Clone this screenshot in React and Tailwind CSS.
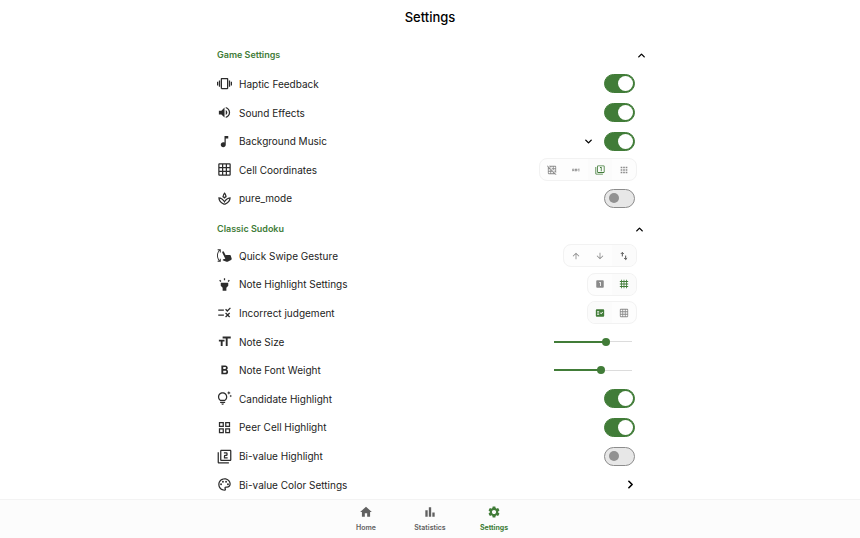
import { useState } from 'react';
import { ChevronDown, ChevronRight, ChevronUp } from 'lucide-react';
import {
  MdAbc,
  MdApps,
  MdArrowDownward,
  MdArrowUpward,
  MdBarChart,
  MdFactCheck,
  MdFilter1,
  MdFilter2,
  MdFormatBold,
  MdFormatSize,
  MdGrid4X4,
  MdGridOff,
  MdGridOn,
  MdHighlight,
  MdHome,
  MdLooksOne,
  MdMusicNote,
  MdOutlineGridView,
  MdOutlinePalette,
  MdOutlineSpa,
  MdOutlineTipsAndUpdates,
  MdRule,
  MdSettings,
  MdSwipeVertical,
  MdVibration,
  MdVolumeUp,
} from 'react-icons/md';

function UpDownIcon({ size }) {
  return (
    <svg viewBox="0 0 24 24" width={size} height={size} fill="none" stroke="currentColor" strokeWidth="2.2">
      <path d="M8 13V4M4.5 7 8 3.5 11.500 7M16 11v9M12.500 17l3.500 3.500 3.500-3.500" />
    </svg>
  );
}

const GAME_ROWS = [
  { label: 'Haptic Feedback', icon: MdVibration, type: 'toggle', on: true },
  { label: 'Sound Effects', icon: MdVolumeUp, type: 'toggle', on: true },
  { label: 'Background Music', icon: MdMusicNote, type: 'toggle', on: true, expandable: true },
  {
    label: 'Cell Coordinates',
    icon: MdGridOn,
    type: 'segment',
    selected: 2,
    options: [
      { name: 'Off', icon: MdGridOff },
      { name: 'Letters', icon: MdAbc },
      { name: 'Numbers', icon: MdFilter1 },
      { name: 'Dots', icon: MdApps },
    ],
  },
  { label: 'pure_mode', icon: MdOutlineSpa, type: 'toggle', on: false },
];

const CLASSIC_ROWS = [
  {
    label: 'Quick Swipe Gesture',
    icon: MdSwipeVertical,
    type: 'segment',
    selected: 2,
    plain: true,
    options: [
      { name: 'Up', icon: MdArrowUpward },
      { name: 'Down', icon: MdArrowDownward },
      { name: 'Both', icon: UpDownIcon },
    ],
  },
  {
    label: 'Note Highlight Settings',
    icon: MdHighlight,
    type: 'segment',
    selected: 1,
    options: [
      { name: 'Single note', icon: MdLooksOne },
      { name: 'Whole grid', icon: MdGrid4X4 },
    ],
  },
  {
    label: 'Incorrect judgement',
    icon: MdRule,
    type: 'segment',
    selected: 0,
    options: [
      { name: 'By answer', icon: MdFactCheck },
      { name: 'By grid', icon: MdGridOn },
    ],
  },
  { label: 'Note Size', icon: MdFormatSize, type: 'slider', value: 69 },
  { label: 'Note Font Weight', icon: MdFormatBold, type: 'slider', value: 61 },
  { label: 'Candidate Highlight', icon: MdOutlineTipsAndUpdates, type: 'toggle', on: true },
  { label: 'Peer Cell Highlight', icon: MdOutlineGridView, type: 'toggle', on: true },
  { label: 'Bi-value Highlight', icon: MdFilter2, type: 'toggle', on: false },
  { label: 'Bi-value Color Settings', icon: MdOutlinePalette, type: 'link' },
];

const TABS = [
  { label: 'Home', icon: MdHome },
  { label: 'Statistics', icon: MdBarChart },
  { label: 'Settings', icon: MdSettings },
];

function Toggle({ id, initial }) {
  const [on, setOn] = useState(initial);
  return (
    <input
      id={id}
      type="checkbox"
      role="switch"
      checked={on}
      onChange={(e) => setOn(e.target.checked)}
      className="flex h-[19px] w-[31px] shrink-0 cursor-pointer appearance-none items-center rounded-full border border-[#8c8c8c] bg-[#e7e7e7] px-1 before:size-[10px] before:rounded-full before:bg-[#919191] checked:justify-end checked:border-[#417c38] checked:bg-[#417c38] checked:px-px checked:before:size-[15px] checked:before:bg-white"
    />
  );
}

function Segment({ label, options, initial, plain }) {
  const [selected, setSelected] = useState(initial);
  return (
    <div role="group" aria-label={label} className="flex h-[23px] overflow-hidden rounded-lg border border-[#f2f2f2] bg-[#fdfdfd]">
      {options.map(({ name, icon: Icon }, i) => {
        const active = i === selected;
        const color = active ? (plain ? 'bg-[#fbfbfb] text-[#444444]' : 'bg-[#fbfbfb] text-[#417c38]') : 'text-[#8a8a8a]';
        return (
          <button
            key={name}
            type="button"
            aria-label={name}
            aria-pressed={active}
            onClick={() => setSelected(i)}
            className={`flex w-6 items-center justify-center ${color}`}
          >
            <Icon size={10} />
          </button>
        );
      })}
    </div>
  );
}

function Slider({ id, initial }) {
  const [value, setValue] = useState(initial);
  return (
    <input
      id={id}
      type="range"
      value={value}
      onChange={(e) => setValue(Number(e.target.value))}
      style={{ backgroundSize: `${value}% 2px, 100% 1px` }}
      className="h-2 w-[78px] cursor-pointer appearance-none bg-[linear-gradient(#417c38,#417c38),linear-gradient(#dcdcdc,#dcdcdc)] bg-[position:left_center] bg-no-repeat [&::-webkit-slider-thumb]:size-2 [&::-webkit-slider-thumb]:appearance-none [&::-webkit-slider-thumb]:rounded-full [&::-webkit-slider-thumb]:bg-[#417c38]"
    />
  );
}

function Row({ row }) {
  const Icon = row.icon;
  const id = row.label.toLowerCase().replace(/[^a-z]+/g, '-');
  const labelClass = 'flex-1 text-[10px] leading-4 text-[#1c1c1c]';

  if (row.type === 'link') {
    return (
      <a href="#colors" className="flex items-center gap-[7px] pr-[10px]">
        <Icon size={15} className="shrink-0 text-[#2c2c2c]" />
        <span className={labelClass}>{row.label}</span>
        <ChevronRight size={13} strokeWidth={3} className="text-black" />
      </a>
    );
  }

  return (
    <div className="flex items-center gap-[7px]">
      <Icon size={15} className="shrink-0 text-[#2c2c2c]" />
      {row.type === 'segment' ? (
        <span className={labelClass}>{row.label}</span>
      ) : (
        <label htmlFor={id} className={labelClass}>{row.label}</label>
      )}
      {row.type === 'toggle' && (
        <div className="flex items-center gap-[10px] pr-3">
          {row.expandable && (
            <button type="button" aria-label="Show music options">
              <ChevronDown size={11} strokeWidth={3} />
            </button>
          )}
          <Toggle id={id} initial={row.on} />
        </div>
      )}
      {row.type === 'segment' && (
        <div className="pr-[10px]">
          <Segment label={row.label} options={row.options} initial={row.selected} plain={row.plain} />
        </div>
      )}
      {row.type === 'slider' && (
        <div className="flex items-center pr-[15px]">
          <Slider id={id} initial={row.value} />
        </div>
      )}
    </div>
  );
}

function SectionHeader({ title, className }) {
  return (
    <div className={`flex items-center justify-between text-[9px] leading-3 font-semibold text-[#417c38] ${className}`}>
      <h2>{title}</h2>
      <button type="button" aria-label={`Collapse ${title}`} className="text-black">
        <ChevronUp size={11} strokeWidth={3} />
      </button>
    </div>
  );
}

export default function App() {
  return (
    <div className="flex h-screen flex-col bg-white font-['Inter',sans-serif] text-black">
      <header className="flex h-[41px] shrink-0 items-center justify-center pb-2">
        <h1 className="text-[13px] leading-5 font-medium">Settings</h1>
      </header>
      <main className="flex-1 overflow-y-auto">
        <div className="mx-auto grid h-full max-w-[434px] auto-rows-[minmax(28px,1fr)] pl-1">
          <SectionHeader title="Game Settings" className="" />
          {GAME_ROWS.map((row) => (
            <Row key={row.label} row={row} />
          ))}
          <SectionHeader title="Classic Sudoku" className="pt-1 pr-[2px]" />
          {CLASSIC_ROWS.map((row) => (
            <Row key={row.label} row={row} />
          ))}
        </div>
      </main>
      <nav className="flex h-[39px] shrink-0 justify-center border-t border-[#f3f3f3] bg-[#fcfcfc]">
        {TABS.map(({ label, icon: Icon }) => (
          <a
            key={label}
            href={`#${label.toLowerCase()}`}
            className={`flex w-16 flex-col items-center justify-center gap-1 text-[7px] leading-[10px] ${label === 'Settings' ? 'font-bold text-[#417c38]' : 'font-semibold text-[#616161]'}`}
          >
            <Icon size={14} />
            {label}
          </a>
        ))}
      </nav>
    </div>
  );
}
